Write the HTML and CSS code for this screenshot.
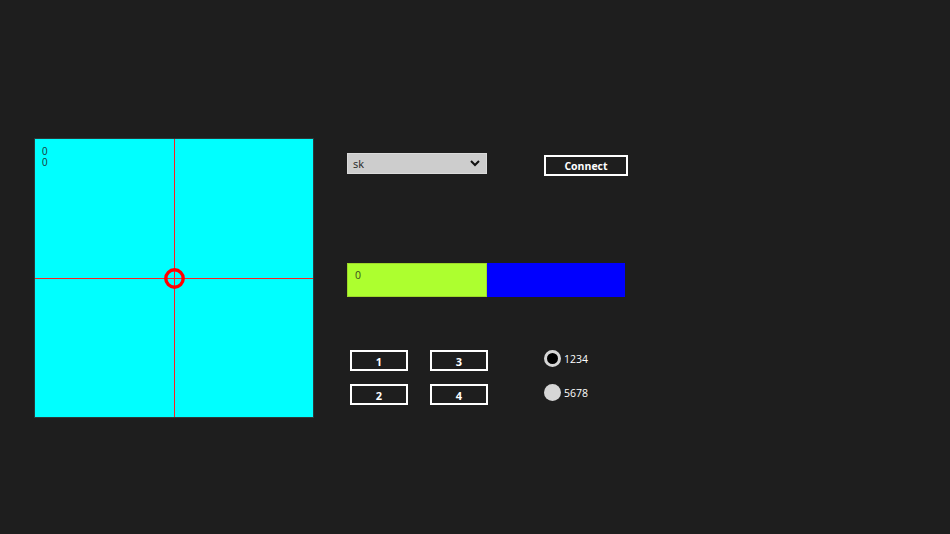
FILE: index.html
```html
<!DOCTYPE html>
<html>
<head>
<meta charset="utf-8">
<link rel="stylesheet" href="styles.css">
</head>
<body>
<div class="app">
  <div class="pad">
    <svg class="cross" width="278" height="278" viewBox="0 0 278 278">
      <line x1="139.5" y1="0" x2="139.5" y2="278" stroke="#ff2020" stroke-width="1"/>
      <line x1="0" y1="139.5" x2="278" y2="139.5" stroke="#ff2020" stroke-width="1"/>
      <circle cx="139.5" cy="139.5" r="8.7" fill="none" stroke="#ff0000" stroke-width="3.4"/>
    </svg>
    <div class="coords"><div class="coord">0</div><div class="coord">0</div></div>
  </div>
  <div class="controls">
    <div class="row-top">
      <div class="select"><span>sk</span>
        <svg width="10" height="7" viewBox="0 0 10 7"><polyline points="1,1 5,5 9,1" fill="none" stroke="#111" stroke-width="2"/></svg>
      </div>
      <div class="btn connect">Connect</div>
    </div>
    <div class="bar">
      <div class="bar-green">0</div>
      <div class="bar-blue"></div>
    </div>
    <div class="row-bottom">
      <div class="btn-grid">
        <div class="btn small">1</div>
        <div class="btn small">3</div>
        <div class="btn small">2</div>
        <div class="btn small">4</div>
      </div>
      <div class="radios">
        <div class="radio"><span class="dot checked"></span><span>1234</span></div>
        <div class="radio"><span class="dot"></span><span>5678</span></div>
      </div>
    </div>
  </div>
</div>
</body>
</html>
```
FILE: styles.css
```css
html, body {
  margin: 0;
  padding: 0;
  background: #1e1e1e;
  width: 950px;
  height: 534px;
  overflow: hidden;
  font-family: "Open Sans", "Noto Sans", "Liberation Sans", sans-serif;
  color: #fff;
}
.app {
  display: flex;
  padding: 139px 0 0 35px;
}
.pad {
  position: relative;
  width: 278px;
  height: 278px;
  background: #00ffff;
  box-shadow: 0 0 0 1px #2a3a3a;
}
.cross {
  position: absolute;
  left: 0;
  top: 0;
}
.coords {
  position: absolute;
  left: 7px;
  top: 7px;
  font-family: "Liberation Sans", Arial, sans-serif;
  font-size: 10px;
  color: #1c3c3c;
}
.coord {
  height: 11px;
  line-height: 11px;
}
.controls {
  margin-left: 34px;
  padding-top: 14px;
  display: flex;
  flex-direction: column;
}
.row-top {
  display: flex;
  align-items: flex-start;
}
.select {
  box-sizing: border-box;
  width: 140px;
  height: 21px;
  background: #cdcdcd;
  border: 1px solid #dadada;
  display: flex;
  align-items: center;
  justify-content: space-between;
  padding: 0 6px 0 5px;
  color: #222;
  font-size: 11px;
}
.btn {
  box-sizing: border-box;
  border: 2px solid #fff;
  display: flex;
  align-items: center;
  justify-content: center;
  font-weight: bold;
  font-size: 11px;
  color: #fff;
}
.connect {
  width: 84px;
  height: 21px;
  margin-left: 57px;
  margin-top: 2px;
  padding-top: 1px;
  font-size: 10.5px;
}
.bar {
  display: flex;
  margin-top: 87px;
  height: 34px;
}
.bar-green {
  box-sizing: border-box;
  width: 140px;
  background: #adff2f;
  color: #3a4a20;
  font-size: 10.5px;
  padding: 5px 0 0 8px;
  box-shadow: inset 0 0 0 1px #9ed82a;
}
.bar-blue {
  width: 138px;
  background: #0000ff;
}
.row-bottom {
  display: flex;
  margin-top: 53px;
  margin-left: 3px;
}
.btn-grid {
  display: grid;
  grid-template-columns: 58px 58px;
  grid-auto-rows: 21px;
  column-gap: 22px;
  row-gap: 13px;
}
.small {
  padding-top: 2px;
}
.radios {
  margin-left: 56px;
  margin-top: -2px;
  display: flex;
  flex-direction: column;
  gap: 13px;
}
.radio {
  height: 21px;
  display: flex;
  align-items: center;
  gap: 3px;
  font-size: 10.5px;
}
.dot {
  box-sizing: border-box;
  width: 17px;
  height: 17px;
  border-radius: 50%;
  background: #d6d6d6;
}
.dot.checked {
  background: #000;
  border: 3.5px solid #d6d6d6;
}
```
